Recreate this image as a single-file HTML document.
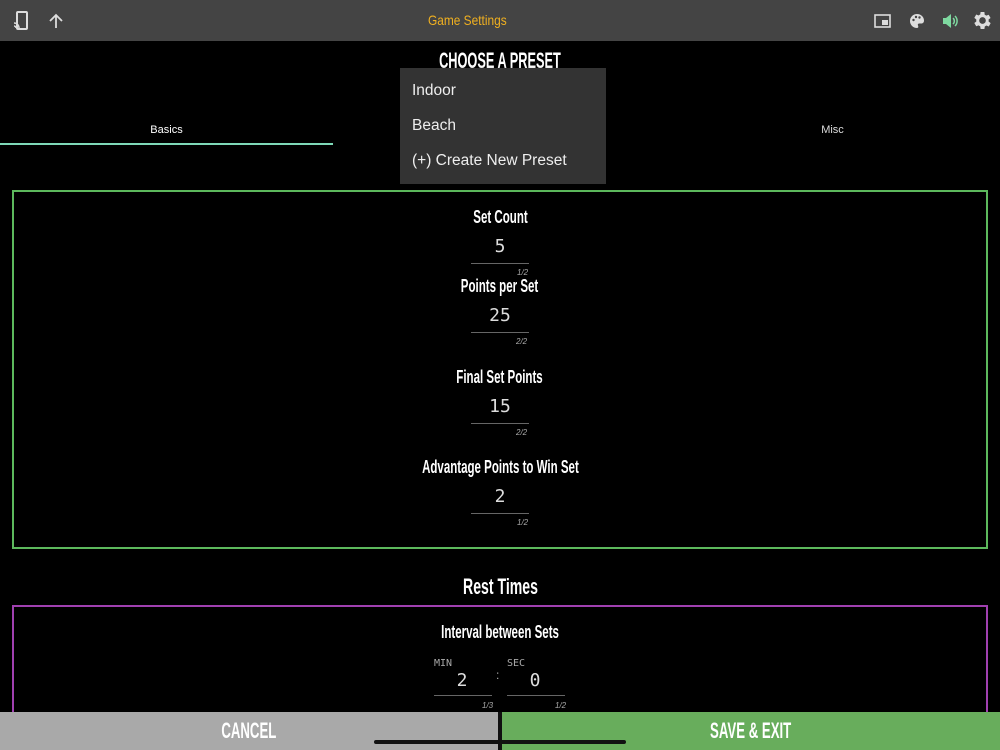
<!DOCTYPE html>
<html><head><style>
body{margin:0;width:1000px;height:750px;background:#000;overflow:hidden;position:relative;font-family:"Liberation Sans",sans-serif;color:#fff}
.a{position:absolute}
.n{font-weight:bold;text-align:center}
.n span{display:inline-block;transform:scaleX(.64);white-space:nowrap}
.lab{font-size:18px;left:0;width:1000px}
.val{font-family:"DejaVu Sans Mono",monospace;font-size:18px;color:#ddd;text-align:center;width:60px;left:470px}
.ln{height:1px;background:#666;width:58px;left:471px}
.sm{font-size:8px;color:#aaa;font-style:italic}
</style></head><body>
<div class="a" style="left:0;top:0;width:1000px;height:41px;background:#444"></div>
<svg class="a" style="left:12px;top:11px" width="18" height="20" viewBox="0 0 18 20"><rect x="5" y="1" width="10" height="17" rx="1" fill="none" stroke="#ddd" stroke-width="2"/><path d="M2 12a5 5 0 0 1 5 5M2 15a2 2 0 0 1 2 2" stroke="#ddd" fill="none" stroke-width="1.5"/></svg>
<svg class="a" style="left:49px;top:13px" width="14" height="16" viewBox="0 0 14 16"><path d="M7 15V2M1 8l6-6 6 6" stroke="#ddd" stroke-width="1.8" fill="none"/></svg>
<div class="a" style="left:0;width:935px;top:12px;font-size:14px;color:#f0b020;text-align:center"><span style="display:inline-block;transform:scaleX(.85)">Game Settings</span></div>
<svg class="a" style="left:874px;top:14px" width="17" height="14"><rect x="1" y="1" width="15" height="12" fill="none" stroke="#ddd" stroke-width="1.6"/><rect x="8" y="6" width="6" height="5" fill="#ddd"/></svg>
<svg class="a" style="left:909px;top:13px" width="16" height="16" viewBox="0 0 16 16"><path d="M8 1a7 7 0 0 0 0 14c1.5 0 1.5-1.5 1-2.5s0-2 1.5-2H13a3 3 0 0 0 2-3C15 4 12 1 8 1z" fill="#ddd"/><circle cx="4.5" cy="7" r="1.2" fill="#444"/><circle cx="7" cy="4" r="1.2" fill="#444"/><circle cx="10.5" cy="4.5" r="1.2" fill="#444"/></svg>
<svg class="a" style="left:942px;top:13px" width="16" height="16" viewBox="0 0 16 16"><path d="M1 5h3l5-4v14l-5-4H1z" fill="#7ed9a0"/><path d="M11 5a4 4 0 0 1 0 6M13 3a7 7 0 0 1 0 10" stroke="#7ed9a0" stroke-width="1.5" fill="none"/></svg>
<svg class="a" style="left:973px;top:11px" width="19" height="19" viewBox="2 2 20 20"><path fill="#ddd" d="M19.4 13a7.6 7.6 0 0 0 0-2l2.1-1.6-2-3.5-2.5 1a7 7 0 0 0-1.7-1L15 3h-4l-.4 2.7a7 7 0 0 0-1.7 1l-2.5-1-2 3.5L6.5 11a7.6 7.6 0 0 0 0 2l-2.1 1.6 2 3.5 2.5-1a7 7 0 0 0 1.7 1L11 21h4l.4-2.7a7 7 0 0 0 1.7-1l2.5 1 2-3.5zM13 15.5a3.5 3.5 0 1 1 0-7 3.5 3.5 0 0 1 0 7z" transform="translate(-1 0)"/></svg>

<div class="a n" style="left:0;width:1000px;top:48px;font-size:22px"><span style="transform:scaleX(.58)">CHOOSE A PRESET</span></div>
<div class="a" style="left:0;width:333px;top:124px;text-align:center;font-size:11px">Basics</div>
<div class="a" style="left:0;top:143px;width:333px;height:2px;background:#7ed9b8"></div>
<div class="a" style="left:666px;width:333px;top:124px;text-align:center;font-size:11px;color:#ddd">Misc</div>

<div class="a" style="left:12px;top:190px;width:972px;height:355px;border:2px solid #5cb85c"></div>
<div class="a n lab" style="top:207px"><span>Set Count</span></div>
<div class="a val" style="top:236px">5</div><div class="a ln" style="top:263px"></div><div class="a sm" style="left:517px;top:268px">1/2</div>
<div class="a n lab" style="top:276px"><span>Points per Set</span></div>
<div class="a val" style="top:305px">25</div><div class="a ln" style="top:332px"></div><div class="a sm" style="left:516px;top:337px">2/2</div>
<div class="a n lab" style="top:367px"><span>Final Set Points</span></div>
<div class="a val" style="top:396px">15</div><div class="a ln" style="top:423px"></div><div class="a sm" style="left:516px;top:428px">2/2</div>
<div class="a n lab" style="top:457px"><span>Advantage Points to Win Set</span></div>
<div class="a val" style="top:486px">2</div><div class="a ln" style="top:513px"></div><div class="a sm" style="left:517px;top:518px">1/2</div>

<div class="a n" style="left:0;width:1000px;top:574px;font-size:22px"><span>Rest Times</span></div>
<div class="a" style="left:12px;top:605px;width:972px;height:120px;border:2px solid #a040b0"></div>
<div class="a n lab" style="top:622px"><span>Interval between Sets</span></div>
<div class="a" style="left:434px;top:658px;font-size:10px;color:#aaa;font-family:'DejaVu Sans Mono',monospace">MIN</div>
<div class="a" style="left:507px;top:658px;font-size:10px;color:#aaa;font-family:'DejaVu Sans Mono',monospace">SEC</div>
<div class="a" style="left:496px;top:668px;font-size:12px;color:#aaa">:</div>
<div class="a val" style="left:432px;top:670px">2</div>
<div class="a val" style="left:505px;top:670px">0</div>
<div class="a" style="left:434px;top:695px;width:58px;height:1px;background:#666"></div>
<div class="a" style="left:507px;top:695px;width:58px;height:1px;background:#666"></div>
<div class="a sm" style="left:482px;top:701px">1/3</div><div class="a sm" style="left:555px;top:701px">1/2</div>

<div class="a" style="left:400px;top:68px;width:206px;height:116px;background:#333;box-shadow:0 2px 4px rgba(0,0,0,.6)"></div>
<div class="a" style="left:412px;top:82px;font-size:15.5px;color:#eee">Indoor</div>
<div class="a" style="left:412px;top:117px;font-size:15.5px;color:#eee">Beach</div>
<div class="a" style="left:412px;top:152px;font-size:15.5px;color:#eee">(+) Create New Preset</div>

<div class="a" style="left:0;top:712px;width:498px;height:38px;background:#a9a9a9"></div>
<div class="a" style="left:502px;top:712px;width:498px;height:38px;background:#68ad5c"></div>
<div class="a" style="left:498px;top:712px;width:4px;height:38px;background:#111"></div>
<div class="a n" style="left:0;width:498px;top:718px;font-size:22px"><span style="transform:scaleX(.6)">CANCEL</span></div>
<div class="a n" style="left:502px;width:498px;top:718px;font-size:22px"><span style="transform:scaleX(.6)">SAVE &amp; EXIT</span></div>
<div class="a" style="left:374px;top:740px;width:252px;height:4px;border-radius:2px;background:#111"></div>
</body></html>
